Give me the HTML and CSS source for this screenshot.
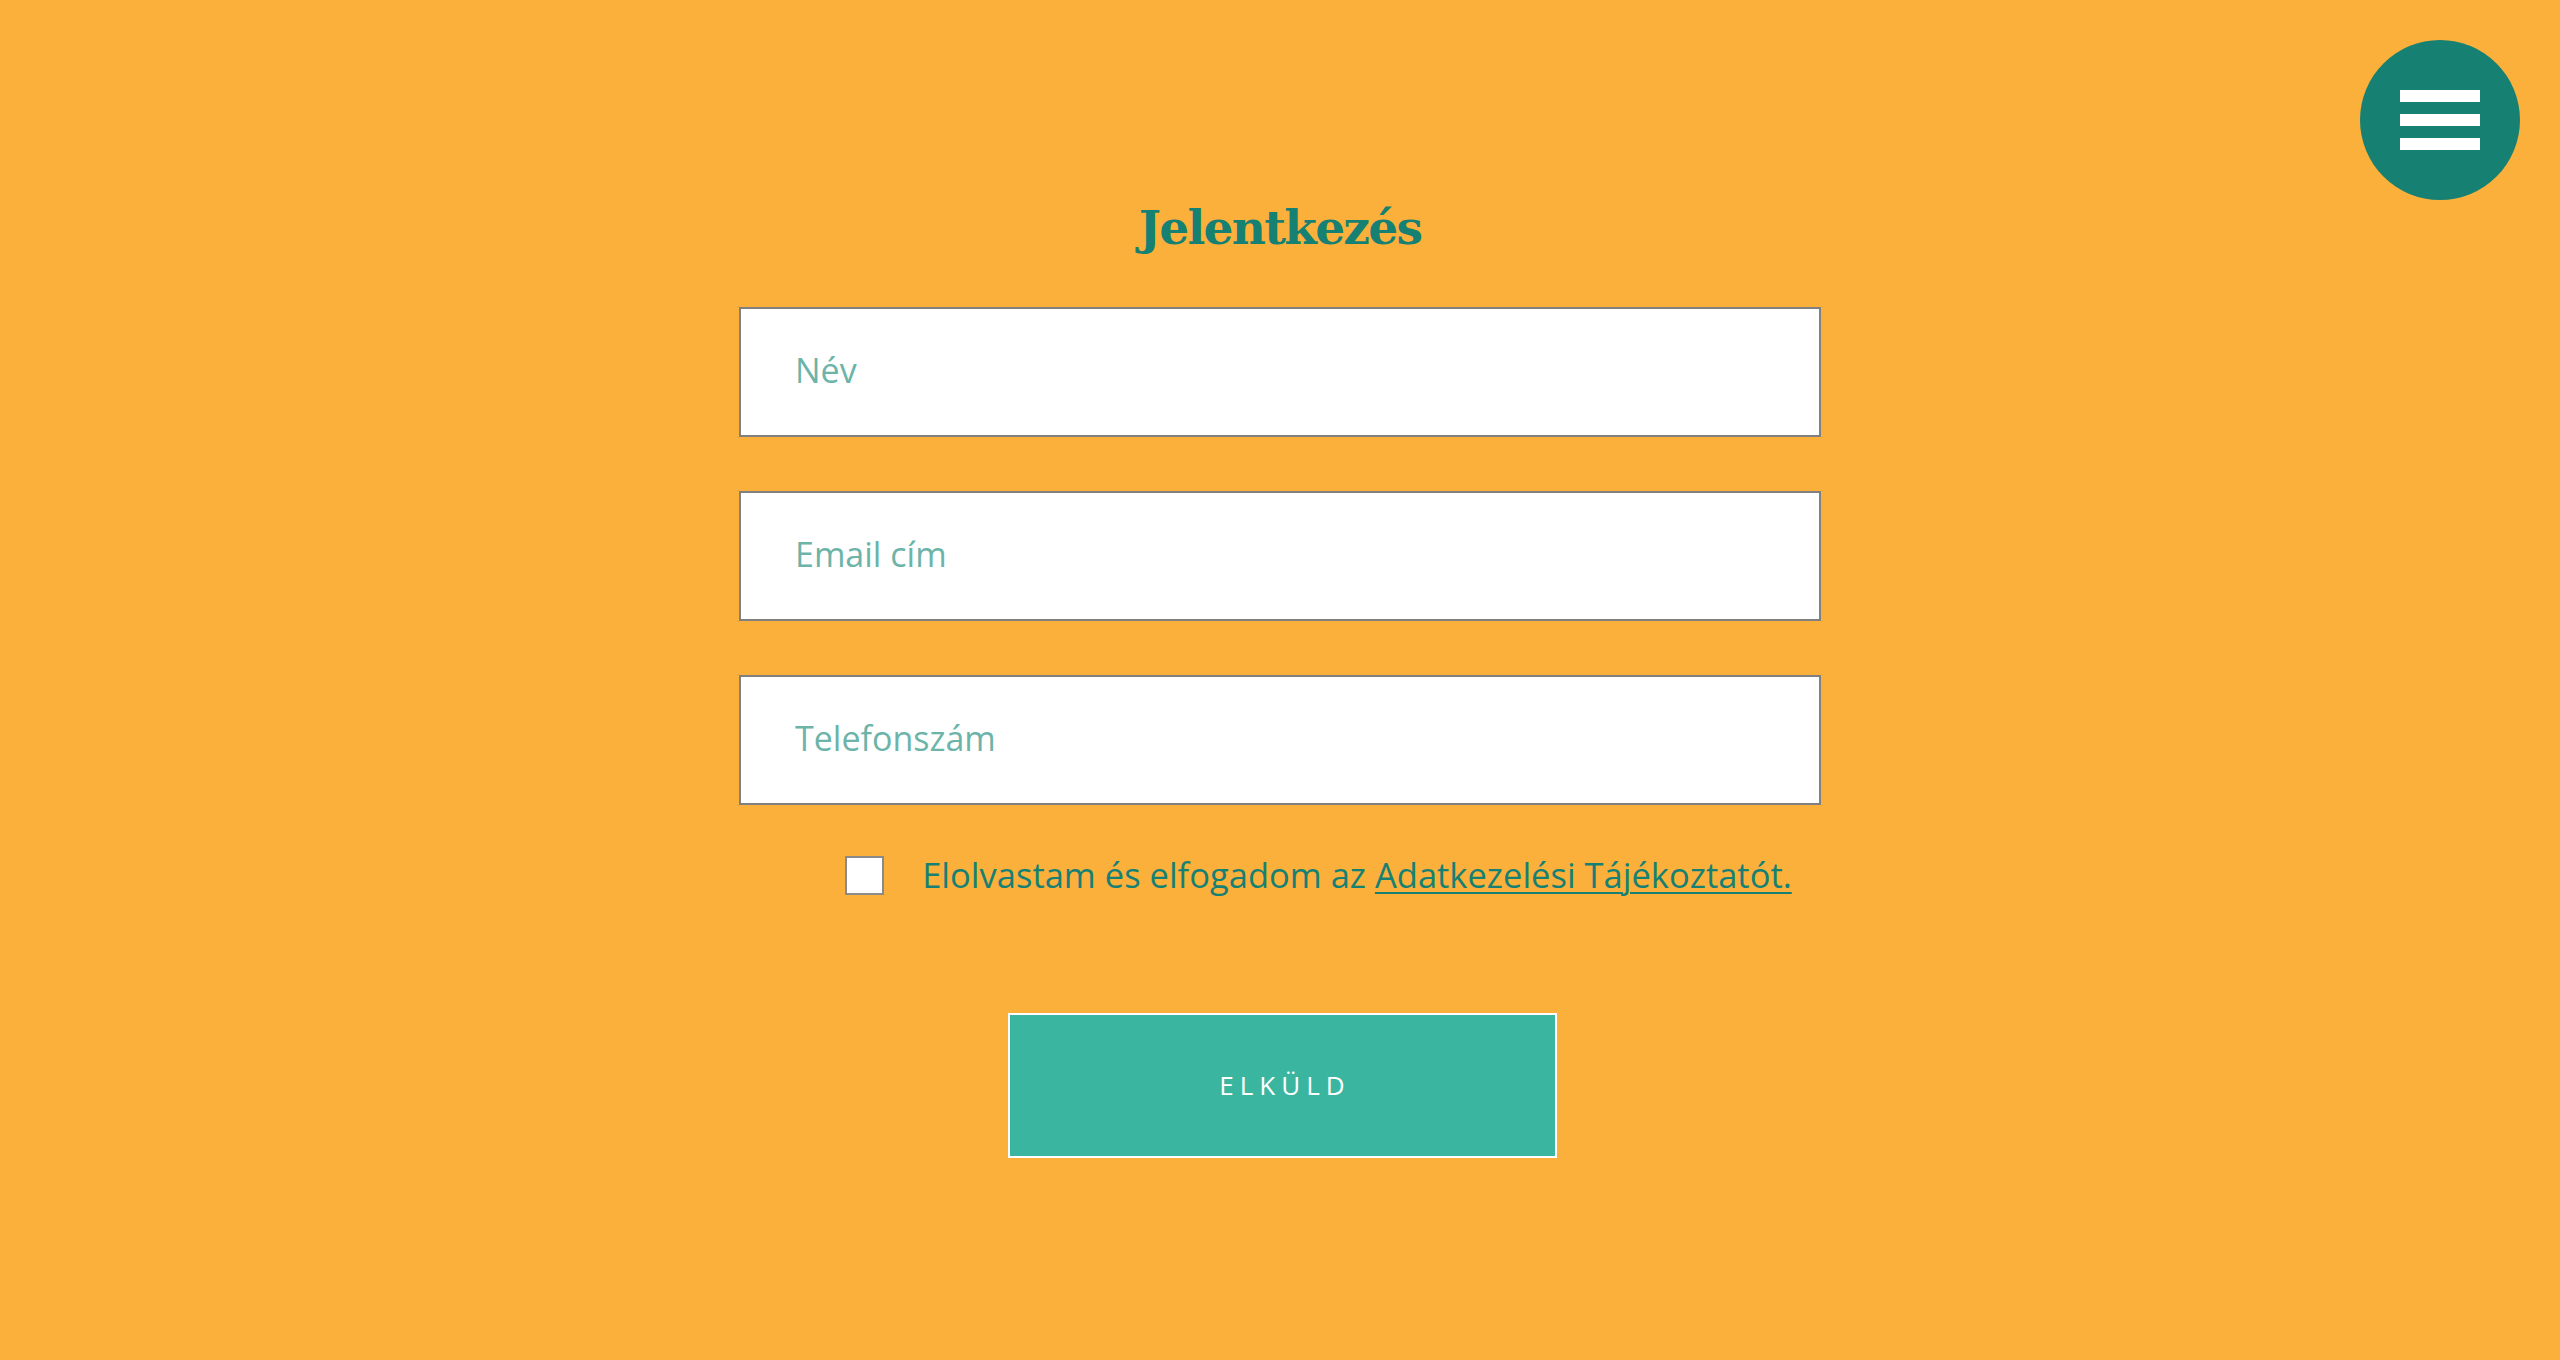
FILE: index.html
```html
<!DOCTYPE html>
<html lang="hu">
<head>
<meta charset="utf-8">
<title>Jelentkezés</title>
<link rel="stylesheet" href="styles.css">
</head>
<body>
<button class="menu-btn" aria-label="Menü">
  <span class="bar"></span><span class="bar"></span><span class="bar"></span>
</button>
<main class="page">
  <h1 class="title">Jelentkezés</h1>
  <form class="form">
    <input class="field" type="text" placeholder="Név">
    <input class="field" type="email" placeholder="Email cím">
    <input class="field" type="tel" placeholder="Telefonszám">
    <label class="consent">
      <input class="check" type="checkbox">
      <span class="consent-text">Elolvastam és elfogadom az <a class="link" href="#">Adatkezelési Tájékoztatót.</a></span>
    </label>
    <button class="submit" type="button">ELKÜLD</button>
  </form>
</main>
</body>
</html>
```
FILE: styles.css
```css
html, body {
  margin: 0;
  padding: 0;
}
body {
  background: #fbb03c;
  min-height: 1360px;
  font-family: "Open Sans", "Noto Sans", sans-serif;
}
.menu-btn {
  position: absolute;
  top: 40px;
  right: 40px;
  width: 160px;
  height: 160px;
  border-radius: 50%;
  border: none;
  background: #168073;
  display: flex;
  flex-direction: column;
  align-items: center;
  justify-content: center;
  gap: 12px;
  padding: 0;
}
.bar {
  display: block;
  width: 80px;
  height: 12px;
  background: #ffffff;
}
.page {
  display: flex;
  flex-direction: column;
  align-items: center;
  padding-top: 198px;
}
.title {
  margin: 0;
  font-family: "DejaVu Serif", "Liberation Serif", serif;
  font-weight: 700;
  font-size: 47px;
  line-height: 60px;
  color: #168073;
  letter-spacing: -1.7px;
}
.form {
  margin-top: 49px;
  width: 1082px;
  display: flex;
  flex-direction: column;
  gap: 54px;
}
.field {
  box-sizing: border-box;
  width: 100%;
  height: 130px;
  border: 2px solid #818181;
  background: #ffffff;
  padding: 0 0 5px 54px;
  font-family: "Open Sans", "Noto Sans", sans-serif;
  font-size: 34px;
  color: #168073;
  outline: none;
}
.field::placeholder {
  color: #6cb4a9;
  opacity: 1;
}
.consent {
  display: flex;
  align-items: center;
  justify-content: center;
  padding-left: 77px;
  gap: 38px;
  margin-top: -6px;
}
.check {
  appearance: none;
  -webkit-appearance: none;
  box-sizing: border-box;
  width: 39px;
  height: 39px;
  margin: 0;
  flex: none;
  border: 2px solid #8a8a8a;
  background: #ffffff;
}
.consent-text {
  font-size: 34.5px;
  line-height: 44px;
  color: #168073;
}
.link {
  color: #168073;
  text-decoration: underline;
  text-decoration-thickness: 2px;
  text-underline-offset: 4px;
}
.submit {
  align-self: center;
  margin-top: 62px;
  box-sizing: border-box;
  width: 549px;
  height: 145px;
  margin-left: 4px;
  background: #3ab6a0;
  border: 2px solid #ffffff;
  color: #ffffff;
  font-family: "Open Sans", "Noto Sans", sans-serif;
  font-size: 26px;
  letter-spacing: 6px;
  padding: 0 0 2px 6px;
}
```
